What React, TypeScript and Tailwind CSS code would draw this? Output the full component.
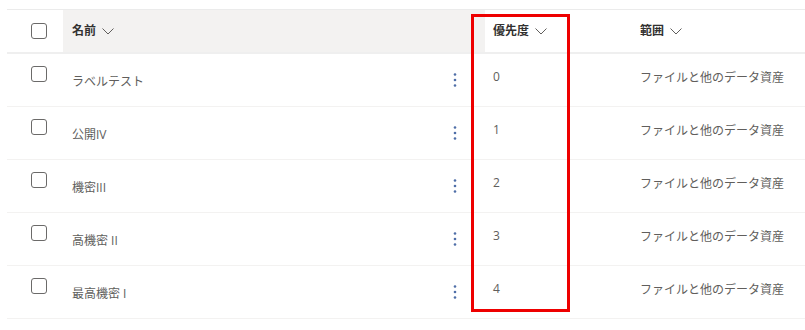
import React from "react";

const rows = [
  { name: "ラベルテスト", p: "0" },
  { name: "公開IV", p: "1" },
  { name: "機密III", p: "2" },
  { name: "高機密 II", p: "3" },
  { name: "最高機密 I", p: "4" },
];

function Chevron() {
  return (
    <svg width="12" height="7" viewBox="0 0 12 7" className="ml-[6px] mt-[1px]">
      <path d="M0.5 0.5 L6 6 L11.5 0.5" fill="none" stroke="#605e5c" strokeWidth="1" />
    </svg>
  );
}

function Check() {
  return <div className="w-4 h-4 rounded-[3px] border border-[#6b6a69] bg-white" />;
}

function Kebab() {
  return (
    <svg width="4" height="16" viewBox="0 0 4 16">
      <circle cx="2" cy="2.5" r="1.3" fill="#4f6ea8" />
      <circle cx="2" cy="8" r="1.3" fill="#4f6ea8" />
      <circle cx="2" cy="13.5" r="1.3" fill="#4f6ea8" />
    </svg>
  );
}

export default function App() {
  return (
    <div
      className="relative w-[805px] h-[330px] bg-white pt-[9px] pl-[7px] overflow-hidden"
      style={{ fontFamily: '"Open Sans", "Noto Sans CJK JP", sans-serif' }}
    >
      <div className="border-t border-[#ebebeb]">
        <div className="grid grid-cols-[56px_422px_147px_173px] h-[44px] border-b-2 border-[#efefef]">
          <div className="flex items-center pl-[24px]">
            <Check />
          </div>
          <div className="flex items-center bg-[#f3f2f1] pl-[9px]">
            <span className="text-[12px] font-bold text-[#323130]">名前</span>
            <Chevron />
          </div>
          <div className="flex items-center pl-[8px]">
            <span className="text-[12px] font-bold text-[#323130]">優先度</span>
            <Chevron />
          </div>
          <div className="flex items-center pl-[8px]">
            <span className="text-[12px] font-bold text-[#323130]">範囲</span>
            <Chevron />
          </div>
        </div>
        {rows.map((r, i) => (
          <div
            key={i}
            className="grid grid-cols-[56px_422px_147px_173px] h-[53px] border-b border-[#f3f2f1]"
          >
            <div className="flex items-start pl-[24px] pt-[12px]">
              <Check />
            </div>
            <div className="flex items-start justify-between pl-[9px] pr-[28px]">
              <span className="text-[12px] leading-4 pt-[20px] text-[#605e5c]">{r.name}</span>
              <div className="pt-[18px]">
                <Kebab />
              </div>
            </div>
            <div className="pl-[8px] pt-[9px]">
              <span className="text-[12px] leading-4 text-[#605e5c]">{r.p}</span>
            </div>
            <div className="pl-[8px] pt-[10px]">
              <span className="text-[12px] leading-4 text-[#605e5c] whitespace-nowrap">
                ファイルと他のデータ資産
              </span>
            </div>
          </div>
        ))}
      </div>
      <div className="absolute left-[471px] top-[14px] w-[99px] h-[298px] border-[3px] border-[#ee0000]" />
    </div>
  );
}
